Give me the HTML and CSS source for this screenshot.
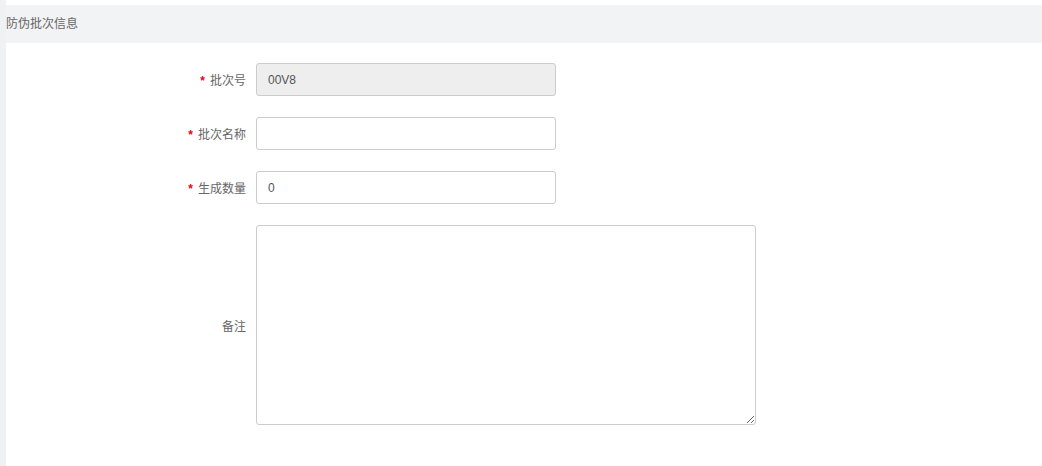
FILE: index.html
```html
<!DOCTYPE html>
<html lang="zh-CN">
<head>
<meta charset="utf-8">
<title>防伪批次信息</title>
<link rel="stylesheet" href="styles.css">
</head>
<body>
<div class="page">
  <div class="main">
    <div class="section-title">防伪批次信息</div>
    <form class="form">
      <div class="row">
        <label class="label"><span class="req">*</span>批次号</label>
        <input class="input" type="text" value="00V8" disabled>
      </div>
      <div class="row">
        <label class="label"><span class="req">*</span>批次名称</label>
        <input class="input" type="text" value="">
      </div>
      <div class="row">
        <label class="label"><span class="req">*</span>生成数量</label>
        <input class="input" type="text" value="0">
      </div>
      <div class="row">
        <label class="label">备注</label>
        <textarea class="textarea"></textarea>
      </div>
    </form>
  </div>
</div>
</body>
</html>
```
FILE: styles.css
```css
html, body {
  margin: 0;
  padding: 0;
  background: #ffffff;
}
body {
  font-family: "Liberation Sans", "Noto Sans CJK SC", sans-serif;
  font-size: 12px;
  color: #666666;
}
.page {
  display: flex;
  height: 466px;
  border-left: 6px solid #f0f1f3;
}
.main {
  flex: 1;
  padding-top: 5px;
}
.section-title {
  height: 38px;
  line-height: 38px;
  background: #f2f3f5;
  color: #666666;
  font-size: 12px;
}
.form {
  padding-top: 20px;
  display: flex;
  flex-direction: column;
  gap: 21px;
}
.row {
  display: flex;
  align-items: center;
}
.label {
  width: 240px;
  padding-right: 10px;
  text-align: right;
  color: #666666;
  font-size: 12px;
}
.req {
  color: #e60012;
  font-weight: bold;
  margin-right: 5px;
}
.input {
  box-sizing: border-box;
  width: 300px;
  height: 33px;
  border: 1px solid #cccccc;
  border-radius: 3px;
  padding: 0 11px;
  font-family: "Liberation Sans", "Noto Sans CJK SC", sans-serif;
  font-size: 12px;
  color: #555555;
  background: #ffffff;
  outline: none;
}
.input:disabled {
  background: #eeeeee;
  color: #555555;
}
.textarea {
  box-sizing: border-box;
  width: 500px;
  height: 200px;
  border: 1px solid #cccccc;
  border-radius: 3px;
  padding: 6px 11px;
  font-family: "Liberation Sans", "Noto Sans CJK SC", sans-serif;
  font-size: 12px;
  color: #555555;
  margin: 0;
  outline: none;
}
```
